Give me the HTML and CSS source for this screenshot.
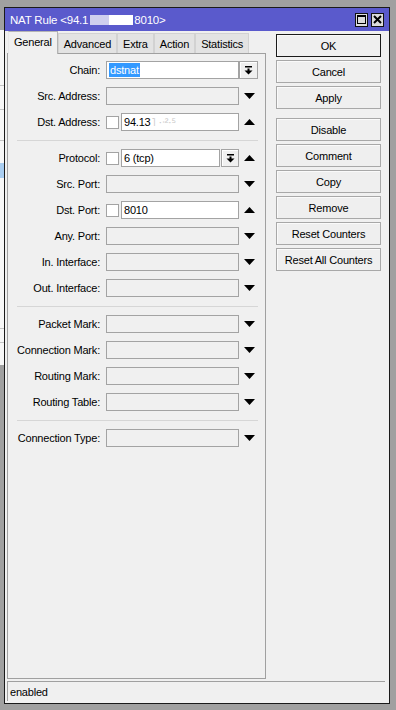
FILE: index.html
```html
<!DOCTYPE html>
<html>
<head>
<meta charset="utf-8">
<link rel="stylesheet" href="styles.css">
</head>
<body>
<div class="screen">
  <div class="bgstrip"></div>
  <div class="window">
    <div class="titlebar">
      <span class="title">NAT Rule &lt;94.1<span class="redact"><span class="r1"></span><span class="r2"></span></span>8010&gt;</span>
      <div class="tb-btns">
        <span class="tb-btn"><svg width="9" height="9" viewBox="0 0 9 9"><rect x="0.5" y="0.5" width="8" height="8" fill="none" stroke="#000" stroke-width="1"/><rect x="0" y="0" width="9" height="2" fill="#000"/></svg></span>
        <span class="tb-btn"><svg width="9" height="9" viewBox="0 0 9 9"><path d="M1 1 L8 8 M8 1 L1 8" stroke="#000" stroke-width="2"/></svg></span>
      </div>
    </div>
    <div class="main">
      <div class="left">
        <div class="tabs">
          <span class="tab active">General</span>
          <span class="tab">Advanced</span>
          <span class="tab">Extra</span>
          <span class="tab">Action</span>
          <span class="tab">Statistics</span>
        </div>
        <div class="panel">
          <div class="group">
            <div class="row"><span class="label">Chain:</span><span class="field on"><span class="sel">dstnat</span></span><span class="ddbtn"><svg width="9" height="9" viewBox="0 0 9 9"><rect x="1" y="0" width="7" height="1.5" fill="#000"/><rect x="3.5" y="2.5" width="2" height="2.5" fill="#000"/><polygon points="0.5,4.5 8.5,4.5 4.5,8.5" fill="#000"/></svg></span></div>
            <div class="row"><span class="label">Src. Address:</span><span class="field"></span><span class="arr"><svg width="11" height="6" viewBox="0 0 11 6"><polygon points="0,0 11,0 5.5,6" fill="#000"/></svg></span></div>
            <div class="row"><span class="label">Dst. Address:</span><span class="cb"></span><span class="field on short">94.13<span class="faint">˥ ·ᐧ²·⁵</span></span><span class="arr"><svg width="11" height="6" viewBox="0 0 11 6"><polygon points="0,6 11,6 5.5,0" fill="#000"/></svg></span></div>
          </div>
          <div class="sep"></div>
          <div class="group">
            <div class="row"><span class="label">Protocol:</span><span class="cb"></span><span class="field on proto">6 (tcp)</span><span class="ddbtn small"><svg width="9" height="9" viewBox="0 0 9 9"><rect x="1" y="0" width="7" height="1.5" fill="#000"/><rect x="3.5" y="2.5" width="2" height="2.5" fill="#000"/><polygon points="0.5,4.5 8.5,4.5 4.5,8.5" fill="#000"/></svg></span><span class="arr"><svg width="11" height="6" viewBox="0 0 11 6"><polygon points="0,6 11,6 5.5,0" fill="#000"/></svg></span></div>
            <div class="row"><span class="label">Src. Port:</span><span class="field"></span><span class="arr"><svg width="11" height="6" viewBox="0 0 11 6"><polygon points="0,0 11,0 5.5,6" fill="#000"/></svg></span></div>
            <div class="row"><span class="label">Dst. Port:</span><span class="cb"></span><span class="field on short">8010</span><span class="arr"><svg width="11" height="6" viewBox="0 0 11 6"><polygon points="0,6 11,6 5.5,0" fill="#000"/></svg></span></div>
            <div class="row"><span class="label">Any. Port:</span><span class="field"></span><span class="arr"><svg width="11" height="6" viewBox="0 0 11 6"><polygon points="0,0 11,0 5.5,6" fill="#000"/></svg></span></div>
            <div class="row"><span class="label">In. Interface:</span><span class="field"></span><span class="arr"><svg width="11" height="6" viewBox="0 0 11 6"><polygon points="0,0 11,0 5.5,6" fill="#000"/></svg></span></div>
            <div class="row"><span class="label">Out. Interface:</span><span class="field"></span><span class="arr"><svg width="11" height="6" viewBox="0 0 11 6"><polygon points="0,0 11,0 5.5,6" fill="#000"/></svg></span></div>
          </div>
          <div class="sep"></div>
          <div class="group">
            <div class="row"><span class="label">Packet Mark:</span><span class="field"></span><span class="arr"><svg width="11" height="6" viewBox="0 0 11 6"><polygon points="0,0 11,0 5.5,6" fill="#000"/></svg></span></div>
            <div class="row"><span class="label">Connection Mark:</span><span class="field"></span><span class="arr"><svg width="11" height="6" viewBox="0 0 11 6"><polygon points="0,0 11,0 5.5,6" fill="#000"/></svg></span></div>
            <div class="row"><span class="label">Routing Mark:</span><span class="field"></span><span class="arr"><svg width="11" height="6" viewBox="0 0 11 6"><polygon points="0,0 11,0 5.5,6" fill="#000"/></svg></span></div>
            <div class="row"><span class="label">Routing Table:</span><span class="field"></span><span class="arr"><svg width="11" height="6" viewBox="0 0 11 6"><polygon points="0,0 11,0 5.5,6" fill="#000"/></svg></span></div>
          </div>
          <div class="sep"></div>
          <div class="group">
            <div class="row"><span class="label">Connection Type:</span><span class="field"></span><span class="arr"><svg width="11" height="6" viewBox="0 0 11 6"><polygon points="0,0 11,0 5.5,6" fill="#000"/></svg></span></div>
          </div>
        </div>
      </div>
      <div class="btns">
        <div class="btn default">OK</div>
        <div class="btn">Cancel</div>
        <div class="btn spaced">Apply</div>
        <div class="btn">Disable</div>
        <div class="btn">Comment</div>
        <div class="btn">Copy</div>
        <div class="btn">Remove</div>
        <div class="btn">Reset Counters</div>
        <div class="btn">Reset All Counters</div>
      </div>
    </div>
    <div class="status">enabled</div>
  </div>
</div>
</body>
</html>
```

FILE: styles.css
```css
html, body {
  margin: 0;
  padding: 0;
}
body {
  background: #a0a0a0;
  font-family: "Liberation Sans", Arial, sans-serif;
  font-size: 11px;
  letter-spacing: -0.2px;
  color: #000;
}
.screen {
  display: flex;
  height: 710px;
  overflow: hidden;
}
.bgstrip {
  width: 4px;
  flex: none;
  background: linear-gradient(to bottom,
    #a0a0a0 0 30px,
    #f7f7f7 30px 85px,
    #c4c4c4 85px 86px,
    #f7f7f7 86px 109px,
    #c4c4c4 109px 110px,
    #f7f7f7 110px 140px,
    #c4c4c4 140px 141px,
    #f7f7f7 141px 163px,
    #a9cdf0 163px 178px,
    #f7f7f7 178px 328px,
    #c4c4c4 328px 329px,
    #f7f7f7 329px 342px,
    #c4c4c4 342px 343px,
    #f7f7f7 343px 365px,
    #a0a0a0 365px);
}
.window {
  width: 384px;
  height: 695px;
  margin-top: 7px;
  border: 1px solid #1a1a1a;
  background: #f0f0f0;
  display: flex;
  flex-direction: column;
  flex: none;
}
.titlebar {
  height: 23px;
  flex: none;
  background: #5a5acc;
  display: flex;
  align-items: center;
  justify-content: space-between;
  padding: 0 5px 0 5px;
  color: #fff;
}
.title {
  font-size: 11.5px;
  white-space: nowrap;
  display: flex;
  align-items: center;
}
.redact {
  display: inline-flex;
  height: 10px;
  margin: 0 1px 0 2px;
}
.r1 {
  width: 19px;
  background: #cfcfee;
}
.r2 {
  width: 24px;
  background: #ffffff;
}
.tb-btns {
  display: flex;
  gap: 3px;
}
.tb-btn {
  width: 13px;
  height: 14px;
  box-sizing: border-box;
  border: 1px solid #111;
  background: #dcdcdc;
  display: flex;
  align-items: center;
  justify-content: center;
}
.tb-btn svg {
  display: block;
}
.main {
  display: flex;
  height: 648px;
  flex: none;
  padding-left: 2px;
}
.left {
  width: 259px;
  flex: none;
  display: flex;
  flex-direction: column;
}
.tabs {
  display: flex;
  height: 22px;
  flex: none;
  align-items: flex-end;
  padding-left: 1px;
}
.tab {
  box-sizing: border-box;
  height: 20px;
  padding: 0 5px;
  border: 1px solid #d2d2d2;
  border-bottom: none;
  background: #e3e3e3;
  display: flex;
  align-items: center;
  white-space: nowrap;
}
.tab.active {
  height: 23px;
  margin-bottom: -1px;
  background: #f0f0f0;
  border-color: #b4b4b4;
  border-left-color: #e8e8e8;
  position: relative;
  z-index: 1;
  padding-bottom: 2px;
}
.panel {
  flex: 1;
  border: 1px solid #a0a0a0;
  padding-top: 7px;
}
.group {
  display: flex;
  flex-direction: column;
  gap: 8px;
}
.sep {
  height: 1px;
  background: #d6d6d6;
  margin: 9px 7px 8px 9px;
}
.row {
  display: flex;
  align-items: center;
  height: 18px;
}
.label {
  width: 92px;
  margin-right: 6px;
  text-align: right;
  flex: none;
  white-space: nowrap;
}
.field {
  width: 133px;
  height: 18px;
  box-sizing: border-box;
  border: 1px solid #a3a3a3;
  background: #f0f0f0;
  flex: none;
  display: flex;
  align-items: center;
  padding-left: 2px;
  white-space: nowrap;
  overflow: hidden;
}
.field.on {
  background: #fff;
}
.field.short {
  width: 118px;
}
.field.proto {
  width: 99px;
  margin-right: 1px;
}
.sel {
  background: #3399ff;
  color: #fff;
  padding: 1px 1px;
}
.faint {
  color: #c8c8c8;
  margin-left: 1px;
}
.cb {
  width: 13px;
  height: 13px;
  box-sizing: border-box;
  border: 1px solid #a3a3a3;
  background: #fff;
  margin-right: 2px;
  flex: none;
}
.ddbtn {
  width: 19px;
  height: 18px;
  box-sizing: border-box;
  border: 1px solid #a3a3a3;
  background: #f0f0f0;
  box-shadow: inset 1px 1px 0 #fff;
  display: flex;
  align-items: center;
  justify-content: center;
  flex: none;
}
.ddbtn.small {
  width: 18px;
}
.ddbtn svg, .arr svg {
  display: block;
}
.arr {
  width: 11px;
  margin-left: 5px;
  display: flex;
  align-items: center;
  flex: none;
}
.btns {
  width: 105px;
  margin-left: 10px;
  padding-top: 3px;
  display: flex;
  flex-direction: column;
  gap: 3px;
  flex: none;
}
.btn {
  height: 23px;
  box-sizing: border-box;
  border: 1px solid #a8a8a8;
  background: #efefef;
  box-shadow: inset 1px 1px 0 #fafafa;
  display: flex;
  align-items: center;
  justify-content: center;
  white-space: nowrap;
}
.btn.default {
  border-color: #1a1a1a;
}
.btn.spaced {
  margin-bottom: 6px;
}
.status {
  height: 20px;
  box-sizing: border-box;
  margin: 2px 4px 0 2px;
  border-top: 1px solid #a0a0a0;
  border-left: 1px solid #a0a0a0;
  padding-left: 2px;
  display: flex;
  align-items: center;
  flex: none;
}
```
